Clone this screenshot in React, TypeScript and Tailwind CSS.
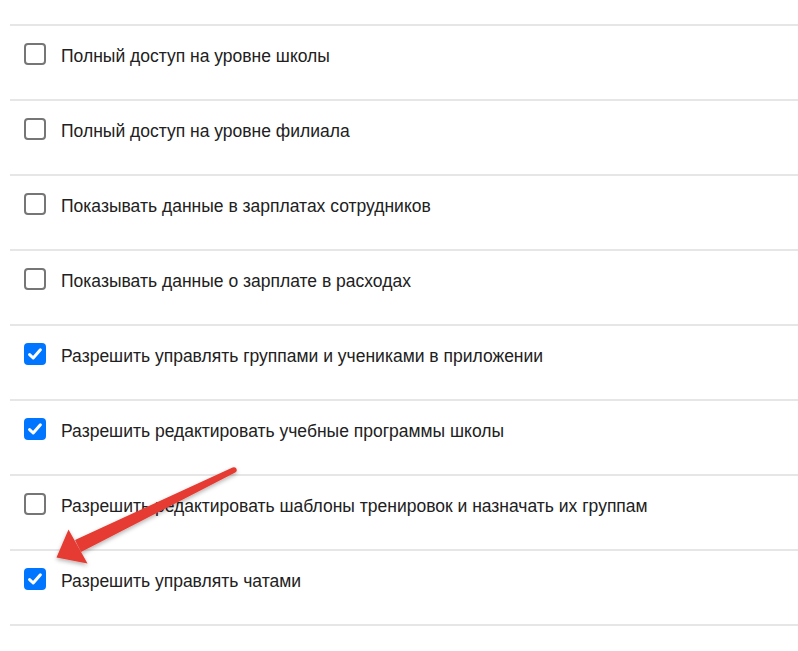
const PERMISSIONS: { label: string; checked: boolean }[] = [
  { label: 'Полный доступ на уровне школы', checked: false },
  { label: 'Полный доступ на уровне филиала', checked: false },
  { label: 'Показывать данные в зарплатах сотрудников', checked: false },
  { label: 'Показывать данные о зарплате в расходах', checked: false },
  { label: 'Разрешить управлять группами и учениками в приложении', checked: true },
  { label: 'Разрешить редактировать учебные программы школы', checked: true },
  { label: 'Разрешить редактировать шаблоны тренировок и назначать их группам', checked: false },
  { label: 'Разрешить управлять чатами', checked: true },
];

function Checkbox({ checked }: { checked: boolean }) {
  if (checked) {
    return (
      <span className="w-[22px] h-[22px] rounded-[4px] bg-[#0075ff] flex items-center justify-center shrink-0">
        <svg width="16" height="16" viewBox="0 0 16 16">
          <path d="M2.6 8.6 L6.2 12 L13.4 3.8" fill="none" stroke="#fff" strokeWidth="3" strokeLinecap="round" strokeLinejoin="round" />
        </svg>
      </span>
    );
  }
  return <span className="w-[22px] h-[22px] rounded-[4px] border-2 border-[#767676] bg-white shrink-0" />;
}

function Arrow() {
  return (
    <svg className="absolute left-0 top-0 pointer-events-none" width="798" height="651" viewBox="0 0 798 651">
      <defs>
        <filter id="sh" x="-20%" y="-20%" width="140%" height="140%">
          <feDropShadow dx="0" dy="2" stdDeviation="2" floodColor="#000" floodOpacity="0.3" />
        </filter>
      </defs>
      <g filter="url(#sh)" fill="#e53a30">
        <path d="M232.6 467.4 Q236.5 466.5 236.8 470.2 Q236.5 472 235.2 472.6 L81 552 L75 540 Z" />
        <path d="M56.5 557.5 L68.5 529.5 L87.5 563.5 Z" />
      </g>
    </svg>
  );
}

export default function App() {
  return (
    <div className="relative w-[798px] h-[651px] bg-white overflow-hidden" style={{ fontFamily: '"Liberation Sans", Arial, sans-serif' }}>
      <div className="pt-6 pl-[10px]">
        {PERMISSIONS.map((p, i) => (
          <div
            key={p.label}
            className={`h-[75px] border-t-2 border-[#e6e6e6] flex items-start pt-[17px] pl-[14px] gap-[15px] ${
              i === PERMISSIONS.length - 1 ? 'border-b-2 h-[77px]' : ''
            }`}
          >
            <Checkbox checked={p.checked} />
            <span className="text-[17.5px] leading-[25px] mt-px text-[#212121]">{p.label}</span>
          </div>
        ))}
      </div>
      <Arrow />
    </div>
  );
}
